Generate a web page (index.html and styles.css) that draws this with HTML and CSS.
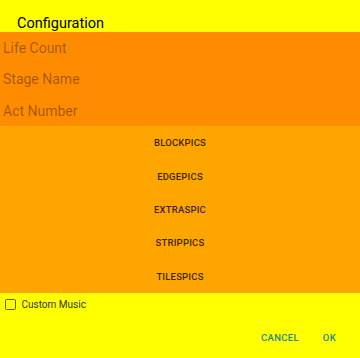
FILE: index.html
```html
<!DOCTYPE html>
<html>
<head>
<meta charset="utf-8">
<link rel="stylesheet" href="styles.css">
</head>
<body>
<div class="dialog">
  <div class="title">Configuration</div>
  <div class="fields">
    <div class="field">Life Count</div>
    <div class="field">Stage Name</div>
    <div class="field">Act Number</div>
  </div>
  <div class="buttons">
    <div class="btn">BLOCKPICS</div>
    <div class="btn">EDGEPICS</div>
    <div class="btn">EXTRASPIC</div>
    <div class="btn">STRIPPICS</div>
    <div class="btn">TILESPICS</div>
  </div>
  <div class="footer">
    <label class="check"><span class="box"></span><span class="check-label">Custom Music</span></label>
    <div class="actions">
      <span class="action">CANCEL</span>
      <span class="action">OK</span>
    </div>
  </div>
</div>
</body>
</html>
```
FILE: styles.css
```css
html, body {
  margin: 0;
  padding: 0;
  background: #ffff00;
  font-family: Roboto, "Noto Sans", sans-serif;
}
.dialog {
  width: 360px;
  height: 358px;
  display: flex;
  flex-direction: column;
  background: #ffff00;
}
.title {
  height: 32px;
  box-sizing: border-box;
  padding: 16px 0 0 17px;
  font-size: 14.5px;
  line-height: 15px;
  color: #000;
}
.fields {
  background: #ff8c00;
  height: 94px;
  display: flex;
  flex-direction: column;
}
.field {
  height: 31.33px;
  box-sizing: border-box;
  padding: 8px 0 0 3px;
  font-size: 14px;
  line-height: 16px;
  color: rgba(0, 0, 0, 0.38);
}
.buttons {
  background: #ffa500;
  height: 167px;
  display: flex;
  flex-direction: column;
}
.btn {
  height: 33.4px;
  display: flex;
  align-items: center;
  justify-content: center;
  font-size: 9.5px;
  font-weight: 500;
  letter-spacing: 0.2px;
  color: rgba(0, 0, 0, 0.8);
}
.footer {
  flex: 1;
  display: flex;
  flex-direction: column;
}
.check {
  display: flex;
  align-items: center;
  padding: 5px 0 0 5px;
  height: 12px;
}
.box {
  width: 9px;
  height: 9px;
  border: 1.5px solid #5a5a3a;
  border-radius: 1.5px;
}
.check-label {
  margin-left: 5.5px;
  font-size: 10px;
  color: #333;
}
.actions {
  display: flex;
  justify-content: flex-end;
  padding: 22px 24px 0 0;
  gap: 24px;
}
.action {
  font-size: 9.5px;
  font-weight: 500;
  letter-spacing: 0.3px;
  color: #1f8a83;
}
```
